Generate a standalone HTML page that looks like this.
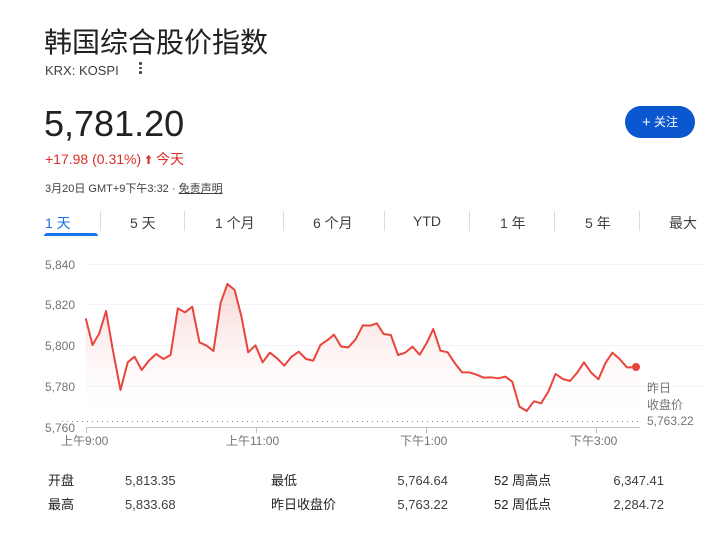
<!DOCTYPE html>
<html><head><meta charset="utf-8"><style>
body{margin:0;width:704px;height:551px;background:#fff;font-family:"Liberation Sans","Noto Sans CJK SC",sans-serif;position:relative;overflow:hidden}
.a{position:absolute;white-space:nowrap}
.tab{position:absolute;top:213px;font-size:14px;color:#3c4043}
.div{position:absolute;top:211px;width:1px;height:20px;background:#dadce0}
.s{position:absolute;font-size:13px;color:#202124;line-height:16px}
.v{position:absolute;font-size:13px;color:#3c4043;line-height:16px}
</style></head><body>
<div class="a" style="left:44px;top:21px;font-size:28px;color:#202124">韩国综合股价指数</div>
<div class="a" style="left:45px;top:63px;font-size:13px;color:#3c4043">KRX: KOSPI</div>
<div class="a" style="left:134px;top:60px;width:12px;height:16px">
<div style="position:absolute;left:5px;top:2px;width:2.5px;height:2.5px;background:#3c4043;border-radius:50%"></div>
<div style="position:absolute;left:5px;top:6.5px;width:2.5px;height:2.5px;background:#3c4043;border-radius:50%"></div>
<div style="position:absolute;left:5px;top:11px;width:2.5px;height:2.5px;background:#3c4043;border-radius:50%"></div></div>
<div class="a" style="left:44px;top:103px;font-size:36px;color:#202124">5,781.20</div>
<div class="a" style="left:625px;top:106px;width:70px;height:32px;border-radius:16px;background:#0b57d0;color:#fff;font-size:12px;line-height:32px;text-align:center"><span style="font-size:15px;vertical-align:-1px">+</span>&nbsp;关注</div>
<div class="a" style="left:45px;top:149px;font-size:14px;color:#d93025">+17.98 (0.31%) <span style="font-size:13px">🠩</span> 今天</div>
<div class="a" style="left:45px;top:180px;font-size:11px;color:#3c4043">3月20日 GMT+9下午3:32 · <span style="text-decoration:underline">免责声明</span></div>
<div class="tab" style="left:45px;color:#1a73e8">1 天</div>
<div class="a" style="left:44px;top:233px;width:54px;height:3px;background:#1a73e8;border-radius:3px 3px 0 0"></div>
<div class="div" style="left:100px"></div>
<div class="tab" style="left:130px">5 天</div>
<div class="div" style="left:184px"></div>
<div class="tab" style="left:215px">1 个月</div>
<div class="div" style="left:283px"></div>
<div class="tab" style="left:313px">6 个月</div>
<div class="div" style="left:384px"></div>
<div class="tab" style="left:413px">YTD</div>
<div class="div" style="left:469px"></div>
<div class="tab" style="left:500px">1 年</div>
<div class="div" style="left:554px"></div>
<div class="tab" style="left:585px">5 年</div>
<div class="div" style="left:639px"></div>
<div class="tab" style="left:669px">最大</div>
<svg class="a" style="left:0;top:0" width="704" height="460">
<defs><linearGradient id="g" x1="0" y1="0" x2="0" y2="1"><stop offset="0" stop-color="#f3b6b2" stop-opacity=".55"/><stop offset="1" stop-color="#fff" stop-opacity="0"/></linearGradient></defs>
<g stroke="#f1f3f4" stroke-width="1"><line x1="86" y1="264.5" x2="704" y2="264.5"/><line x1="86" y1="304.5" x2="704" y2="304.5"/><line x1="86" y1="345.5" x2="704" y2="345.5"/><line x1="86" y1="386.5" x2="704" y2="386.5"/></g>
<line x1="86" y1="427.5" x2="640" y2="427.5" stroke="#bdc1c6"/>
<line x1="62" y1="421.5" x2="640" y2="421.5" stroke="#80868b" stroke-dasharray="1,4"/>
<g stroke="#bdc1c6"><line x1="86.5" y1="427" x2="86.5" y2="433"/><line x1="256.5" y1="427" x2="256.5" y2="433"/><line x1="426.5" y1="427" x2="426.5" y2="433"/><line x1="596.5" y1="427" x2="596.5" y2="433"/></g>
<g transform="translate(0,240) scale(0.4513,0.3333)">
<polygon fill="url(#g)" points="190,560 190,235 205,315 220,280 235,213 250,330 267,450 283,367 298,350 314,390 330,362 346,342 362,357 378,345 394,205 410,217 426,200 442,307 458,317 473,333 489,188 504,132 520,150 535,230 550,337 566,316 582,367 598,338 614,355 630,377 646,350 662,335 678,357 694,362 710,315 726,300 740,284 756,320 772,322 788,298 804,256 820,257 835,250 850,282 866,285 882,345 898,338 914,320 930,344 946,308 960,267 976,332 992,337 1008,370 1024,397 1040,397 1056,404 1072,413 1088,412 1104,415 1120,410 1135,425 1151,500 1167,513 1183,484 1199,490 1215,455 1231,402 1247,417 1263,423 1279,398 1294,367 1310,398 1326,418 1342,368 1357,338 1373,357 1389,382 1416,382 1416,560"/>
<polyline fill="none" stroke="#e8453c" stroke-width="2" vector-effect="non-scaling-stroke" stroke-linejoin="round" points="190,235 205,315 220,280 235,213 250,330 267,450 283,367 298,350 314,390 330,362 346,342 362,357 378,345 394,205 410,217 426,200 442,307 458,317 473,333 489,188 504,132 520,150 535,230 550,337 566,316 582,367 598,338 614,355 630,377 646,350 662,335 678,357 694,362 710,315 726,300 740,284 756,320 772,322 788,298 804,256 820,257 835,250 850,282 866,285 882,345 898,338 914,320 930,344 946,308 960,267 976,332 992,337 1008,370 1024,397 1040,397 1056,404 1072,413 1088,412 1104,415 1120,410 1135,425 1151,500 1167,513 1183,484 1199,490 1215,455 1231,402 1247,417 1263,423 1279,398 1294,367 1310,398 1326,418 1342,368 1357,338 1373,357 1389,382 1416,382"/>
</g>
<circle cx="636" cy="367" r="4" fill="#e8453c"/>
<g font-family="Liberation Sans,Noto Sans CJK SC,sans-serif" font-size="12" fill="#70757a">
<text x="45" y="269">5,840</text><text x="45" y="309">5,820</text><text x="45" y="350">5,800</text><text x="45" y="391">5,780</text><text x="45" y="432">5,760</text>
<text x="61" y="445">上午9:00</text><text x="226" y="445">上午11:00</text><text x="400" y="445">下午1:00</text><text x="570" y="445">下午3:00</text>
<text x="647" y="392">昨日</text><text x="647" y="409">收盘价</text><text x="647" y="425">5,763.22</text>
</g>
</svg>
<div class="s" style="left:48px;top:473px">开盘</div><div class="v" style="left:125px;top:473px">5,813.35</div>
<div class="s" style="left:271px;top:473px">最低</div><div class="v" style="left:378px;top:473px;width:70px;text-align:right">5,764.64</div>
<div class="s" style="left:494px;top:473px">52 周高点</div><div class="v" style="left:594px;top:473px;width:70px;text-align:right">6,347.41</div>
<div class="s" style="left:48px;top:497px">最高</div><div class="v" style="left:125px;top:497px">5,833.68</div>
<div class="s" style="left:271px;top:497px">昨日收盘价</div><div class="v" style="left:378px;top:497px;width:70px;text-align:right">5,763.22</div>
<div class="s" style="left:494px;top:497px">52 周低点</div><div class="v" style="left:594px;top:497px;width:70px;text-align:right">2,284.72</div>
</body></html>
